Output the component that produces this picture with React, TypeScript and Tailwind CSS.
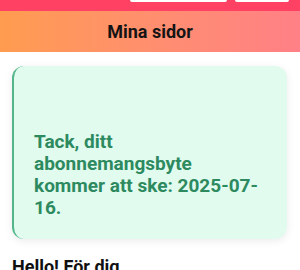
import React from "react";

export default function App() {
  return (
    <div className="w-[300px] h-[270px] overflow-hidden bg-white" style={{ fontFamily: "Roboto, 'Noto Sans', sans-serif" }}>
      <div className="h-[11px] bg-[#ff4164] flex items-start">
        <div className="ml-[130px] w-[97px] h-[2px] bg-white rounded-b-[2px]" />
        <div className="ml-[8px] w-[54px] h-[2px] bg-white rounded-b-[2px]" />
      </div>
      <div className="h-[41px] bg-gradient-to-r from-[#ff9c4f] to-[#ff8086] flex items-center justify-center">
        <span className="text-[18px] font-bold text-[#141414] leading-none">Mina sidor</span>
      </div>
      <div className="px-[12px] pt-[14px] pr-[13px]">
        <div className="rounded-xl border-l-2 border-[#52b68a] bg-[#e1fbef] shadow-[0_2px_8px_rgba(0,0,0,0.08)] px-5 pb-5 pt-[65px]">
          <p className="text-[19px] leading-[22px] font-bold text-[#2d8a5f]">
            Tack, ditt abonnemangsbyte kommer att ske: 2025-07-16.
          </p>
        </div>
      </div>
      <h2 className="px-[12px] mt-[16px] text-[18px] leading-[24px] font-bold text-[#111]">Hello! För dig</h2>
    </div>
  );
}
